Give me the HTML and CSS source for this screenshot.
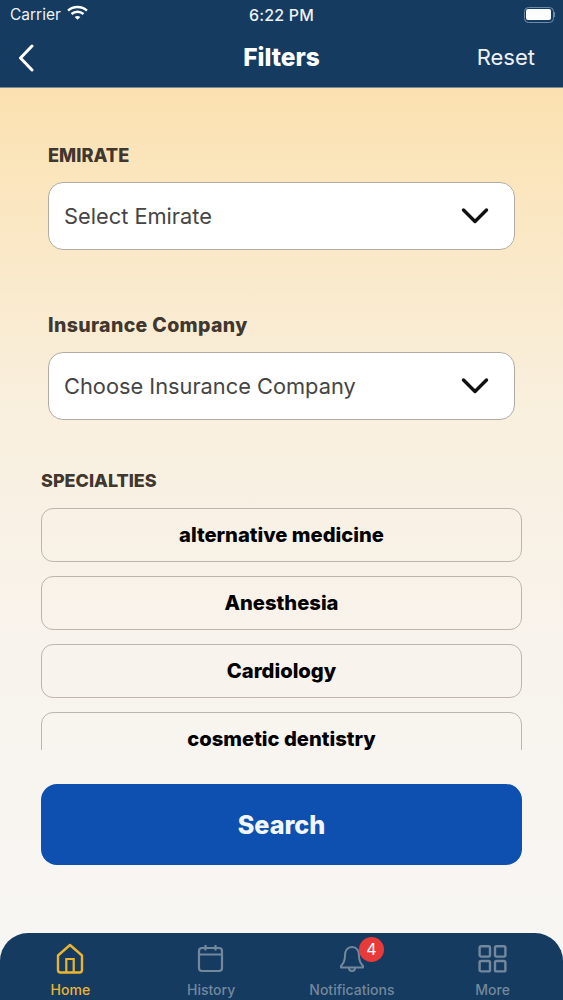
FILE: index.html
```html
<!DOCTYPE html>
<html lang="en">
<head>
<meta charset="utf-8">
<title>Filters</title>
<link rel="stylesheet" href="styles.css">
</head>
<body>
<div class="app">
  <header class="top">
    <div class="status">
      <div class="status-left">
        <span>Carrier</span>
        <svg class="wifi" viewBox="0 0 20 15" width="21" height="16"><path d="M1 5.200C6 .6 14 .6 19 5.200" fill="none" stroke="#fff" stroke-width="2.400"/><path d="M4.300 8.400C7.600 5.500 12.400 5.500 15.700 8.400" fill="none" stroke="#fff" stroke-width="2.400"/><path d="M7.300 11.200c1.600-1.200 3.800-1.200 5.400 0L10 14z" fill="#fff"/></svg>
      </div>
      <div class="status-time">6:22 PM</div>
      <div class="status-right">
        <span class="battery"><span class="battery-fill"></span></span><span class="battery-cap"></span>
      </div>
    </div>
    <div class="nav">
      <svg class="back" viewBox="0 0 18 28" width="18" height="28"><path d="M15 2 3.500 14 15 26" fill="none" stroke="#fff" stroke-width="3" stroke-linecap="round" stroke-linejoin="round"/></svg>
      <h1 class="nav-title">Filters</h1>
      <span class="nav-reset">Reset</span>
    </div>
  </header>

  <main class="content">
    <section class="field field-first">
      <h2 class="label">EMIRATE</h2>
      <div class="select">
        <span>Select Emirate</span>
        <svg viewBox="0 0 28 18" width="28" height="18"><path d="M2.500 3 14 14.500 25.500 3" fill="none" stroke="#111" stroke-width="3.400" stroke-linecap="round" stroke-linejoin="round"/></svg>
      </div>
    </section>
    <section class="field field-second">
      <h2 class="label label-mixed">Insurance Company</h2>
      <div class="select">
        <span>Choose Insurance Company</span>
        <svg viewBox="0 0 28 18" width="28" height="18"><path d="M2.500 3 14 14.500 25.500 3" fill="none" stroke="#111" stroke-width="3.400" stroke-linecap="round" stroke-linejoin="round"/></svg>
      </div>
    </section>
    <section class="specialties">
      <h2 class="label label-spec">SPECIALTIES</h2>
      <div class="spec-list">
        <div class="spec">alternative medicine</div>
        <div class="spec">Anesthesia</div>
        <div class="spec">Cardiology</div>
        <div class="spec">cosmetic dentistry</div>
      </div>
    </section>
    <button class="search">Search</button>
  </main>

  <nav class="tabs">
    <div class="tab tab-active">
      <svg viewBox="0 0 30 32" width="30" height="32"><path d="M3 12.500 15 2l12 10.500V27a2.500 2.500 0 0 1-2.500 2.500h-19A2.500 2.500 0 0 1 3 27z" fill="none" stroke="currentColor" stroke-width="2.400" stroke-linejoin="round"/><path d="M11.300 29V16h7.400V29" fill="none" stroke="currentColor" stroke-width="2.200"/></svg>
      <span>Home</span>
    </div>
    <div class="tab">
      <svg viewBox="0 0 30 32" width="30" height="32"><rect x="3" y="5" width="23" height="23" rx="3" fill="none" stroke="currentColor" stroke-width="2.200"/><path d="M3 11.500h23M9.500 2v5.500M19.500 2v5.500" fill="none" stroke="currentColor" stroke-width="2.200"/></svg>
      <span>History</span>
    </div>
    <div class="tab">
      <span class="bell-wrap">
        <svg viewBox="0 0 30 32" width="30" height="32"><path d="M15 4c-4.500 0-7 3.500-7 8.500 0 5.500-1.500 8-4 10.500v1.500h22V23c-2.500-2.500-4-5-4-10.500 0-5-2.500-8.500-7-8.500z" fill="none" stroke="currentColor" stroke-width="2" stroke-linejoin="round"/><path d="M12 25a3 3 0 0 0 6 0" fill="none" stroke="currentColor" stroke-width="2"/></svg>
        <span class="badge">4</span>
      </span>
      <span>Notifications</span>
    </div>
    <div class="tab">
      <svg viewBox="0 0 30 32" width="30" height="32"><g fill="none" stroke="currentColor" stroke-width="2.400"><rect x="1.600" y="3.200" width="10.400" height="10.400" rx="1.500"/><rect x="17" y="3.200" width="10.400" height="10.400" rx="1.500"/><rect x="1.600" y="18" width="10.400" height="10.400" rx="1.500"/><rect x="17" y="18" width="10.400" height="10.400" rx="1.500"/></g></svg>
      <span>More</span>
    </div>
  </nav>
</div>
</body>
</html>
```
FILE: styles.css
```css
* { box-sizing: border-box; }
html, body { margin: 0; padding: 0; }
body { width: 563px; height: 1000px; overflow: hidden; font-family: "Inter", "Liberation Sans", sans-serif; }
.app { width: 563px; height: 1000px; display: flex; flex-direction: column; background: linear-gradient(180deg, #fbe1b0 87px, #f9efdd 400px, #f8f3ec 640px, #f8f6f3 900px); }
.top { height: 88px; background: #153b61; border-bottom: 1px solid #7f8c95; color: #fff; flex: none; }
.status { height: 29px; padding: 0 8px 0 10px; display: grid; grid-template-columns: 1fr auto 1fr; align-items: center; color: #eef2f6; }
.status-left { display: flex; align-items: center; gap: 6px; font-size: 15.500px; }
.wifi { margin-top: -3px; }
.status-time { font-weight: 500; font-size: 16px; letter-spacing: .2px; margin-left: -2px; }
.status-right { display: flex; justify-content: flex-end; align-items: center; }
.battery { width: 30px; height: 16px; border: 1.500px solid #6f8aa6; border-radius: 4.500px; padding: 1.500px; display: block; }
.battery-fill { display: block; height: 100%; background: #fff; border-radius: 2px; }
.battery-cap { width: 1.500px; height: 5px; background: #6f8aa6; }
.nav { height: 58px; padding: 0 28px 0 17px; display: grid; grid-template-columns: 107px 1fr 107px; align-items: center; }
.back { margin-top: -1px; }
.nav-title { margin: -2px 0 0 11px; text-align: center; font-size: 24.500px; font-weight: 800; line-height: 1; }
.nav-reset { justify-self: end; font-size: 22px; color: #eef2f6; margin-top: -3px; }
.content { flex: 1; display: flex; flex-direction: column; min-height: 0; }
.field { padding: 0 48px; }
.field-first { padding-top: 55px; }
.field-second { padding-top: 63px; }
.label { margin: 0; font-size: 18.200px; font-weight: 800; line-height: 24px; color: #40372f; }
.label-mixed { font-size: 19.500px; letter-spacing: .35px; }
.label-spec { font-size: 18px; line-height: 23px; padding-bottom: 1px; }
.select { margin-top: 15px; height: 68px; background: #fff; border: 1.500px solid #b0aca4; border-radius: 15px; display: flex; align-items: center; justify-content: space-between; padding: 0 25.500px 0 15px; font-size: 21.800px; color: #454545; }
.specialties { padding: 0 41px; margin-top: 49px; }
.spec-list { margin-top: 15px; height: 242px; overflow: hidden; display: flex; flex-direction: column; gap: 14px; }
.spec { flex: none; height: 54px; border: 1.500px solid #bcb6ac; border-radius: 12px; display: flex; align-items: center; justify-content: center; padding-bottom: 1px; font-size: 20.200px; font-weight: 800; color: #000; }
.search { margin: 34px 41px 0; height: 81px; background: #0e50af; color: #f2f6fb; border: 0; border-radius: 16px; font-family: inherit; font-size: 25.200px; font-weight: 800; }
.tabs { flex: none; height: 67px; background: #153b61; border-radius: 28px 28px 0 0; display: grid; grid-template-columns: repeat(4, 1fr); }
.tab { display: flex; flex-direction: column; align-items: center; color: #73889c; font-size: 14px; font-weight: 500; padding-top: 10px; gap: 6px; }
.tab-active { color: #ecb52f; }
.tab > span:last-child { line-height: 17px; }
.tab svg { display: block; }
.bell-wrap { position: relative; display: block; height: 32px; }
.badge { position: absolute; left: 22px; top: -6px; width: 25px; height: 25px; border-radius: 50%; background: #e93a3a; color: #fff; font-size: 16px; font-weight: 400; line-height: 25px; text-align: center; }
```
